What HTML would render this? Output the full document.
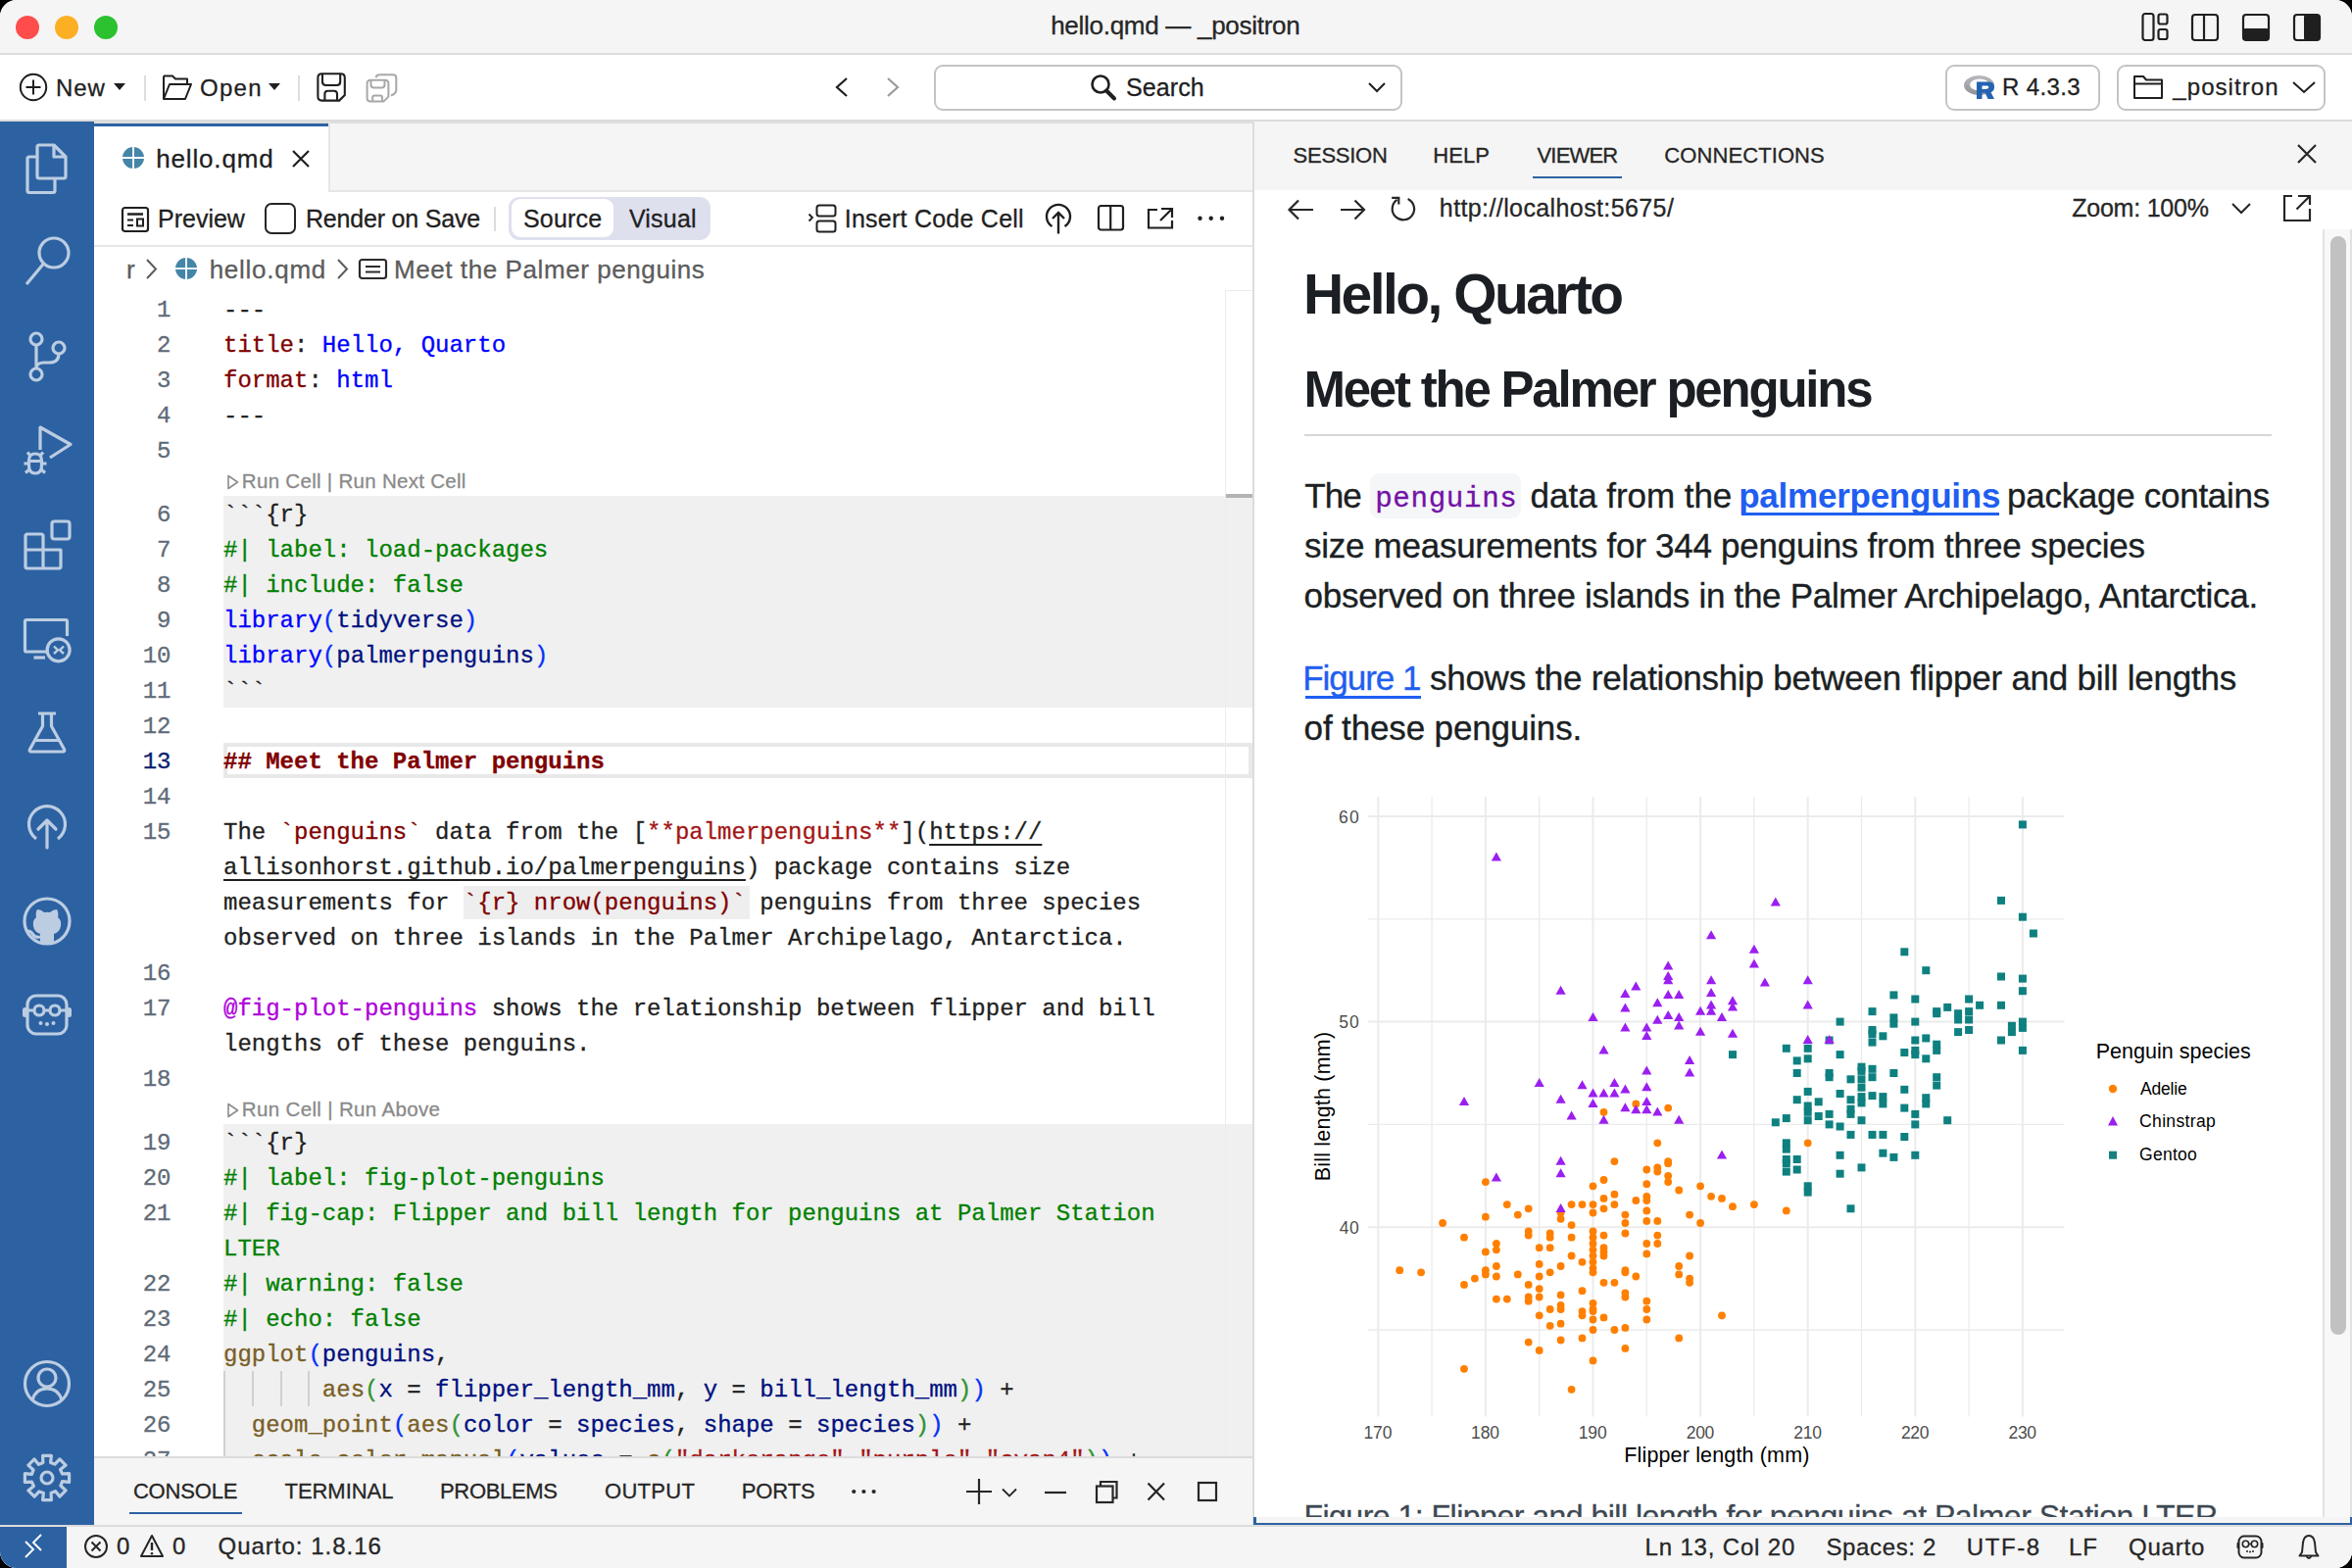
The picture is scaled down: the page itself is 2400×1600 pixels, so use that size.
<!DOCTYPE html><html><head><meta charset="utf-8"><style>
html,body{margin:0;padding:0;background:#000;}
#win{position:absolute;left:0;top:0;width:2400px;height:1600px;overflow:hidden;border-radius:17px;background:#fff;}
.t{position:absolute;white-space:pre;line-height:1;-webkit-text-stroke:0.3px currentColor;}
.r{position:absolute;}
svg.r{overflow:visible}
</style></head><body><div id="win">

<div class="r" style="left:0px;top:0px;width:2400px;height:54px;background:#f5f5f5;"></div>
<div class="r" style="left:0px;top:54px;width:2400px;height:2px;background:#dcdcdc;"></div>
<div class="r" style="left:0px;top:56px;width:2400px;height:66px;background:#ffffff;"></div>
<div class="r" style="left:0px;top:122px;width:2400px;height:2px;background:#dcdcdc;"></div>
<div class="r" style="left:0px;top:124px;width:96px;height:1434px;background:#2d62a2;"></div>
<div class="r" style="left:96px;top:124px;width:1184px;height:71px;background:#f5f5f5;"></div>
<div class="r" style="left:96px;top:194px;width:1184px;height:2px;background:#e6e6e6;"></div>
<div class="r" style="left:96px;top:124px;width:1182px;height:2px;background:#dedede;"></div>
<div class="r" style="left:96px;top:126px;width:239px;height:70px;background:#ffffff;"></div>
<div class="r" style="left:96px;top:126px;width:239px;height:2.5px;background:#2d62a2;"></div>
<div class="r" style="left:335px;top:124px;width:2px;height:71px;background:#e6e6e6;"></div>
<div class="r" style="left:96px;top:196px;width:1182px;height:54px;background:#ffffff;"></div>
<div class="r" style="left:96px;top:250px;width:1182px;height:2px;background:#e6e6e6;"></div>
<div class="r" style="left:96px;top:252px;width:1182px;height:1234px;background:#ffffff;"></div>
<div class="r" style="left:1278px;top:124px;width:2px;height:1434px;background:#dcdcdc;"></div>
<div class="r" style="left:1280px;top:124px;width:1120px;height:70px;background:#f5f5f5;"></div>
<div class="r" style="left:96px;top:1486px;width:1182px;height:2px;background:#dcdcdc;"></div>
<div class="r" style="left:96px;top:1488px;width:1182px;height:68px;background:#f5f5f5;"></div>
<div class="r" style="left:0px;top:1556px;width:2400px;height:2px;background:#dcdcdc;"></div>
<div class="r" style="left:0px;top:1558px;width:2400px;height:42px;background:#f5f5f5;"></div>
<div class="r" style="left:0px;top:1558px;width:68px;height:42px;background:#2d62a2;"></div>
<svg class="r" style="left:0px;top:0px;" width="140" height="54" viewBox="0 0 140 54"><circle cx="28" cy="28" r="12" fill="#fe4d4a"/><circle cx="68" cy="28" r="12" fill="#fdaf24"/><circle cx="108" cy="28" r="12" fill="#2bc12f"/></svg>
<div class="t" style="left:1072.18px;top:13.4px;font-size:26px;color:#262626;font-weight:normal;font-family:'Liberation Sans', sans-serif;letter-spacing:-0.281px;">hello.qmd — _positron</div>
<svg class="r" style="left:2180px;top:10px;" width="200" height="36" viewBox="0 0 200 36"><rect x="6.5" y="4" width="11" height="27" rx="2.5" fill="none" stroke="#1f1f1f" stroke-width="2.2"/><rect x="22.5" y="4.5" width="9" height="10" rx="2" fill="none" stroke="#1f1f1f" stroke-width="2.2"/><rect x="22.5" y="20" width="9" height="10" rx="2" fill="none" stroke="#1f1f1f" stroke-width="2.2"/><rect x="57" y="5" width="26" height="26" rx="3" fill="none" stroke="#1f1f1f" stroke-width="2.2"/><line x1="69" y1="5" x2="69" y2="31" stroke="#1f1f1f" stroke-width="2.2"/><rect x="109" y="5" width="26" height="26" rx="3" fill="none" stroke="#1f1f1f" stroke-width="2.2"/><rect x="109" y="19" width="26" height="12" rx="2" fill="#1f1f1f"/><rect x="161" y="5" width="26" height="26" rx="3" fill="none" stroke="#1f1f1f" stroke-width="2.2"/><rect x="171" y="5" width="16" height="26" rx="2" fill="#1f1f1f"/></svg>
<svg class="r" style="left:18px;top:73px;" width="32" height="32" viewBox="0 0 32 32"><circle cx="16" cy="16" r="13.2" fill="none" stroke="#1f1f1f" stroke-width="2"/><line x1="16" y1="8.5" x2="16" y2="23.5" stroke="#1f1f1f" stroke-width="2"/><line x1="8.5" y1="16" x2="23.5" y2="16" stroke="#1f1f1f" stroke-width="2"/></svg>
<div class="t" style="left:57.08px;top:77.6px;font-size:24px;color:#1f1f1f;font-weight:normal;font-family:'Liberation Sans', sans-serif;letter-spacing:0.900px;">New</div>
<svg class="r" style="left:114px;top:84px;" width="18" height="12" viewBox="0 0 18 12"><path d="M2 1 L14 1 L8 8 Z" fill="#1f1f1f"/></svg>
<div class="r" style="left:147px;top:77px;width:2px;height:26px;background:#dedede;"></div>
<svg class="r" style="left:164px;top:75px;" width="36" height="30" viewBox="0 0 36 30"><path d="M3 2.5 L12 2.5 L15 5.5 L27 5.5 L27 10" fill="none" stroke="#1f1f1f" stroke-width="2" stroke-linejoin="round"/><path d="M3 2.5 L3 26 L25 26 L31 11 L9 11 L3 26" fill="none" stroke="#1f1f1f" stroke-width="2" stroke-linejoin="round"/></svg>
<div class="t" style="left:203.92px;top:77.6px;font-size:24px;color:#1f1f1f;font-weight:normal;font-family:'Liberation Sans', sans-serif;letter-spacing:1.320px;">Open</div>
<svg class="r" style="left:272px;top:84px;" width="18" height="12" viewBox="0 0 18 12"><path d="M2 1 L14 1 L8 8 Z" fill="#1f1f1f"/></svg>
<div class="r" style="left:304px;top:77px;width:2px;height:26px;background:#dedede;"></div>
<svg class="r" style="left:322px;top:73px;" width="32" height="32" viewBox="0 0 32 32"><path d="M6.4 2.2 L25.8 2.2 Q29.8 2.2 29.8 6.2 L29.8 24 L24.2 29.6 L6.4 29.6 Q2.4 29.6 2.4 25.6 L2.4 6.2 Q2.4 2.2 6.4 2.2 Z" fill="none" stroke="#1f1f1f" stroke-width="2.1"/><path d="M7 2.2 L7 10.5 Q7 14 10.5 14 L21.7 14 Q25.2 14 25.2 10.5 L25.2 2.2" fill="none" stroke="#1f1f1f" stroke-width="2.1"/><path d="M9.4 29.6 L9.4 23 Q9.4 19.7 12.7 19.7 L18.7 19.7 Q22 19.7 22 23 L22 29.6" fill="none" stroke="#1f1f1f" stroke-width="2.1"/></svg>
<svg class="r" style="left:372px;top:73px;" width="36" height="34" viewBox="0 0 36 34"><path d="M6.1 8.7 L20.9 8.7 Q24.4 8.7 24.4 12.2 L24.4 25.6 L19.4 30.6 L6.1 30.6 Q2.6 30.6 2.6 27.1 L2.6 12.2 Q2.6 8.7 6.1 8.7 Z" fill="none" stroke="#a8a8a8" stroke-width="2"/><path d="M6.5 8.7 L6.5 13.5 Q6.5 16.5 9.5 16.5 L17.5 16.5 Q20.5 16.5 20.5 13.5 L20.5 8.7" fill="none" stroke="#a8a8a8" stroke-width="2"/><path d="M8.2 30.6 L8.2 26.5 Q8.2 24.5 10.2 24.5 L16 24.5 Q18 24.5 18 26.5 L18 30.6" fill="none" stroke="#a8a8a8" stroke-width="2"/><path d="M11.4 6 Q12.5 3.3 15.5 3.3 L29 3.3 Q32.3 3.3 32.3 6.6 L32.3 19 Q32.3 22.5 27 24.5" fill="none" stroke="#a8a8a8" stroke-width="2"/></svg>
<svg class="r" style="left:846px;top:76px;" width="80" height="26" viewBox="0 0 80 26"><path d="M18 4 L8 13 L18 22" fill="none" stroke="#1f1f1f" stroke-width="2.2"/><path d="M60 4 L70 13 L60 22" fill="none" stroke="#9a9a9a" stroke-width="2.2"/></svg>
<div class="r" style="left:953px;top:65.5px;width:478px;height:47px;background:#fff;box-sizing:border-box;border:2px solid #c4c4c4;border-radius:9px;"></div>
<svg class="r" style="left:1110px;top:74px;" width="32" height="32" viewBox="0 0 32 32"><circle cx="13" cy="12" r="8.5" fill="none" stroke="#1f1f1f" stroke-width="2.6"/><line x1="19" y1="18.5" x2="27" y2="26.5" stroke="#1f1f1f" stroke-width="4" stroke-linecap="round"/></svg>
<div class="t" style="left:1148.88px;top:77.3px;font-size:25px;color:#1f1f1f;font-weight:normal;font-family:'Liberation Sans', sans-serif;letter-spacing:0.125px;">Search</div>
<svg class="r" style="left:1394px;top:82px;" width="24" height="14" viewBox="0 0 24 14"><path d="M3 3 L11 11 L19 3" fill="none" stroke="#1f1f1f" stroke-width="2"/></svg>
<div class="r" style="left:1984.5px;top:65.5px;width:158px;height:47px;background:#fff;box-sizing:border-box;border:2px solid #c4c4c4;border-radius:9px;"></div>
<svg class="r" style="left:2002px;top:74px;" width="36" height="30" viewBox="0 0 36 30"><defs><linearGradient id="rg" x1="0" y1="0" x2="0" y2="1"><stop offset="0" stop-color="#b9b9bf"/><stop offset="1" stop-color="#8f9096"/></linearGradient></defs><ellipse cx="17.5" cy="13" rx="15.5" ry="10" fill="url(#rg)"/><ellipse cx="18" cy="12.5" rx="10" ry="6" fill="#fff"/><path d="M15 9.5 L27.5 9.5 Q33 9.5 33 15 Q33 19 29.5 20 L33 27 L26.5 27 L23.5 20.5 L20.5 20.5 L20.5 27 L15 27 Z M20.5 13.5 L20.5 17 L25.5 17 Q27.5 17 27.5 15.2 Q27.5 13.5 25.5 13.5 Z" fill="#2463b2" fill-rule="evenodd"/></svg>
<div class="t" style="left:2043.08px;top:77.4px;font-size:24px;color:#1f1f1f;font-weight:normal;font-family:'Liberation Sans', sans-serif;letter-spacing:0.347px;">R 4.3.3</div>
<div class="r" style="left:2160px;top:65.5px;width:213px;height:47px;background:#fff;box-sizing:border-box;border:2px solid #c4c4c4;border-radius:9px;"></div>
<svg class="r" style="left:2174px;top:74px;" width="36" height="30" viewBox="0 0 36 30"><path d="M4 4 L13 4 L16 7.5 L32 7.5 L32 26 L4 26 Z" fill="none" stroke="#1f1f1f" stroke-width="2" stroke-linejoin="round"/><line x1="4" y1="11.5" x2="32" y2="11.5" stroke="#1f1f1f" stroke-width="2"/></svg>
<div class="t" style="left:2217.36px;top:77.4px;font-size:24px;color:#1f1f1f;font-weight:normal;font-family:'Liberation Sans', sans-serif;letter-spacing:1.055px;">_positron</div>
<svg class="r" style="left:2336px;top:80px;" width="32" height="18" viewBox="0 0 32 18"><path d="M4 4 L15 14 L26 4" fill="none" stroke="#1f1f1f" stroke-width="2"/></svg>
<svg class="r" style="left:125px;top:150px;" width="22" height="22" viewBox="0 0 22 22"><circle cx="11.0" cy="11.0" r="11.0" fill="#4585a8"/><line x1="11.0" y1="0" x2="11.0" y2="22" stroke="#fff" stroke-width="1.8"/><line x1="0" y1="11.0" x2="22" y2="11.0" stroke="#fff" stroke-width="1.8"/></svg>
<div class="t" style="left:159.18px;top:148.9px;font-size:26px;color:#1f1f1f;font-weight:normal;font-family:'Liberation Sans', sans-serif;letter-spacing:0.850px;">hello.qmd</div>
<svg class="r" style="left:296px;top:151px;" width="22" height="22" viewBox="0 0 22 22"><path d="M3 3 L19 19 M19 3 L3 19" stroke="#1f1f1f" stroke-width="2.2"/></svg>
<svg class="r" style="left:122px;top:209px;" width="32" height="32" viewBox="0 0 32 32"><rect x="3" y="3" width="26" height="24" rx="2.5" fill="none" stroke="#1f1f1f" stroke-width="2.2"/><line x1="8" y1="9.5" x2="24" y2="9.5" stroke="#1f1f1f" stroke-width="2.4"/><line x1="8" y1="15.5" x2="14" y2="15.5" stroke="#1f1f1f" stroke-width="2"/><line x1="8" y1="21" x2="14" y2="21" stroke="#1f1f1f" stroke-width="2"/><rect x="18" y="14.5" width="6" height="7" fill="none" stroke="#1f1f1f" stroke-width="2"/></svg>
<div class="t" style="left:161.0px;top:210.9px;font-size:25px;color:#1f1f1f;font-weight:normal;font-family:'Liberation Sans', sans-serif;letter-spacing:0.000px;">Preview</div>
<div class="r" style="left:269.5px;top:207px;width:32px;height:32px;background:transparent;box-sizing:border-box;border:2.2px solid #262626;border-radius:7px;"></div>
<div class="t" style="left:312.0px;top:210.9px;font-size:25px;color:#1f1f1f;font-weight:normal;font-family:'Liberation Sans', sans-serif;letter-spacing:-0.192px;">Render on Save</div>
<div class="r" style="left:504px;top:211px;width:2px;height:25px;background:#dcdcdc;"></div>
<div class="r" style="left:519px;top:200.5px;width:206px;height:44px;background:#dfe0ee;border-radius:11px;"></div>
<div class="r" style="left:522px;top:203px;width:104px;height:39px;background:#ffffff;border-radius:9px;"></div>
<div class="t" style="left:533.88px;top:210.9px;font-size:25px;color:#1f1f1f;font-weight:normal;font-family:'Liberation Sans', sans-serif;letter-spacing:0.225px;">Source</div>
<div class="t" style="left:641.88px;top:210.9px;font-size:25px;color:#1f1f1f;font-weight:normal;font-family:'Liberation Sans', sans-serif;letter-spacing:0.225px;">Visual</div>
<svg class="r" style="left:822px;top:205px;" width="34" height="36" viewBox="0 0 34 36"><path d="M3.5 13.5 L7 17 L3.5 20.5" fill="none" stroke="#1f1f1f" stroke-width="1.8"/><rect x="11.5" y="4.5" width="19" height="11" rx="2.5" fill="none" stroke="#1f1f1f" stroke-width="2"/><rect x="11.5" y="20.5" width="19" height="11" rx="2.5" fill="none" stroke="#1f1f1f" stroke-width="2"/></svg>
<div class="t" style="left:861.75px;top:211.2px;font-size:25px;color:#1f1f1f;font-weight:normal;font-family:'Liberation Sans', sans-serif;letter-spacing:0.242px;">Insert Code Cell</div>
<svg class="r" style="left:1064px;top:204px;" width="32" height="38" viewBox="0 0 32 38"><path d="M9.5 27 A12 12 0 1 1 22.5 27" fill="none" stroke="#1f1f1f" stroke-width="2.4"/><line x1="16" y1="13" x2="16" y2="34.5" stroke="#1f1f1f" stroke-width="2.4"/><path d="M10 19 L16 13 L22 19" fill="none" stroke="#1f1f1f" stroke-width="2.4"/></svg>
<svg class="r" style="left:1118px;top:207px;" width="30" height="30" viewBox="0 0 30 30"><rect x="3" y="3" width="25" height="24.5" rx="2.5" fill="none" stroke="#1f1f1f" stroke-width="2.2"/><line x1="15.2" y1="3" x2="15.2" y2="27.5" stroke="#1f1f1f" stroke-width="2.2"/></svg>
<svg class="r" style="left:1168px;top:209px;" width="32" height="28" viewBox="0 0 32 28"><path d="M13 5 L4 5 L4 23.5 L28 23.5 L28 16" fill="none" stroke="#1f1f1f" stroke-width="2.2"/><path d="M17 4 L28 4 L28 13 M28 4 L16 16" fill="none" stroke="#1f1f1f" stroke-width="2.2"/></svg>
<svg class="r" style="left:1220px;top:218px;" width="32" height="10" viewBox="0 0 32 10"><circle cx="4.5" cy="4.8" r="2.2" fill="#1f1f1f"/><circle cx="15.7" cy="4.8" r="2.2" fill="#1f1f1f"/><circle cx="27" cy="4.8" r="2.2" fill="#1f1f1f"/></svg>
<div class="t" style="left:129px;top:261.9px;font-size:26px;color:#5c5c5c;font-weight:normal;font-family:'Liberation Sans', sans-serif;">r</div>
<svg class="r" style="left:146px;top:262px;" width="18" height="26" viewBox="0 0 18 26"><path d="M4 3 L13 12.5 L4 22" fill="none" stroke="#5c5c5c" stroke-width="2"/></svg>
<svg class="r" style="left:179px;top:263px;" width="22" height="22" viewBox="0 0 22 22"><circle cx="11.0" cy="11.0" r="11.0" fill="#4585a8"/><line x1="11.0" y1="0" x2="11.0" y2="22" stroke="#fff" stroke-width="1.8"/><line x1="0" y1="11.0" x2="22" y2="11.0" stroke="#fff" stroke-width="1.8"/></svg>
<div class="t" style="left:213.68px;top:261.9px;font-size:26px;color:#5c5c5c;font-weight:normal;font-family:'Liberation Sans', sans-serif;letter-spacing:0.738px;">hello.qmd</div>
<svg class="r" style="left:341px;top:262px;" width="18" height="26" viewBox="0 0 18 26"><path d="M4 3 L13 12.5 L4 22" fill="none" stroke="#5c5c5c" stroke-width="2"/></svg>
<svg class="r" style="left:364px;top:262px;" width="34" height="26" viewBox="0 0 34 26"><rect x="3" y="3" width="27" height="19" rx="2.5" fill="none" stroke="#2b2b2b" stroke-width="2.2"/><line x1="9" y1="10" x2="24" y2="10" stroke="#2b2b2b" stroke-width="2"/><line x1="9" y1="15.5" x2="24" y2="15.5" stroke="#2b2b2b" stroke-width="2"/></svg>
<div class="t" style="left:401.92px;top:261.9px;font-size:26px;color:#5c5c5c;font-weight:normal;font-family:'Liberation Sans', sans-serif;letter-spacing:0.584px;">Meet the Palmer penguins</div>
<svg class="r" style="left:20px;top:140px;" width="56" height="64" viewBox="0 0 56 64"><path d="M18 20 L18 10 Q18 8 20 8 L35 8 L47 20 L47 40 Q47 42 45 42 L20 42 Q18 42 18 40 Z" stroke-width="3.2" fill="none" stroke="#bccde2" stroke-linejoin="round"/><path d="M35 8 L35 20 L47 20" stroke-width="3.2" fill="none" stroke="#bccde2" stroke-linejoin="round"/><path d="M18 20 L10 20 Q8 20 8 22 L8 54.5 Q8 56.5 10 56.5 L34 56.5 Q36 56.5 36 54.5 L36 42" stroke-width="3.2" fill="none" stroke="#bccde2" stroke-linejoin="round"/></svg>
<svg class="r" style="left:20px;top:236px;" width="56" height="64" viewBox="0 0 56 64"><circle cx="35" cy="22" r="15" stroke-width="3.2" fill="none" stroke="#bccde2" stroke-linejoin="round"/><line x1="24.5" y1="33" x2="7" y2="54" stroke-width="3.2" fill="none" stroke="#bccde2" stroke-linejoin="round"/></svg>
<svg class="r" style="left:20px;top:334px;" width="56" height="60" viewBox="0 0 56 60"><circle cx="17" cy="12" r="6" stroke-width="3.2" fill="none" stroke="#bccde2" stroke-linejoin="round"/><circle cx="17" cy="48" r="6" stroke-width="3.2" fill="none" stroke="#bccde2" stroke-linejoin="round"/><circle cx="40" cy="21" r="6" stroke-width="3.2" fill="none" stroke="#bccde2" stroke-linejoin="round"/><path d="M17 18 L17 42 M40 27 Q40 36 30 36 L25 36 Q17 36 17 42" stroke-width="3.2" fill="none" stroke="#bccde2" stroke-linejoin="round"/></svg>
<svg class="r" style="left:20px;top:430px;" width="56" height="60" viewBox="0 0 56 60"><path d="M21 29 L21 6 L52 23.5 L31 37" stroke-width="3.2" fill="none" stroke="#bccde2" stroke-linejoin="round"/><path d="M9.5 40 Q9.5 33 16 33 Q22.5 33 22.5 40 L22.5 45 Q22.5 53 16 53 Q9.5 53 9.5 45 Z" stroke-width="3.2" fill="none" stroke="#bccde2" stroke-linejoin="round"/><path d="M11 35 L8 31.5 M21 35 L24 31.5 M9.5 43 L4.5 43 M22.5 43 L27.5 43 M10 49 L6 52.5 M22 49 L26 52.5 M9.5 40.5 L22.5 40.5" stroke-width="3.2" fill="none" stroke="#bccde2" stroke-linejoin="round"/></svg>
<svg class="r" style="left:20px;top:525px;" width="56" height="60" viewBox="0 0 56 60"><path d="M6 22 L6 53 Q6 55 8 55 L40 55 Q42 55 42 53 L42 36 L24 36 L24 22 Q24 20 22 20 L8 20 Q6 20 6 22 Z M24 36 L24 55 M6 36 L24 36" stroke-width="3.2" fill="none" stroke="#bccde2" stroke-linejoin="round"/><rect x="33" y="7" width="18" height="18" rx="2.5" stroke-width="3.2" fill="none" stroke="#bccde2" stroke-linejoin="round"/></svg>
<svg class="r" style="left:20px;top:625px;" width="56" height="58" viewBox="0 0 56 58"><path d="M30 40 L7 40 Q5.5 40 5.5 38.5 L5.5 9 Q5.5 7.5 7 7.5 L47 7.5 Q48.5 7.5 48.5 9 L48.5 24" stroke-width="3.2" fill="none" stroke="#bccde2" stroke-linejoin="round"/><line x1="14.5" y1="46" x2="26" y2="46" stroke-width="3.2" fill="none" stroke="#bccde2" stroke-linejoin="round"/><circle cx="39.6" cy="38.3" r="11.5" stroke-width="3.2" fill="none" stroke="#bccde2" stroke-linejoin="round"/><path d="M35 34.5 L39 38.3 L35 42 M45 34.5 L41 38.3 L45 42" stroke="#bccde2" stroke-width="2.4" fill="none"/></svg>
<svg class="r" style="left:20px;top:721px;" width="56" height="54" viewBox="0 0 56 54"><path d="M19 7 L37 7 M23.5 7 L23.5 20 L10.5 43.5 Q9.5 46 12 46 L44 46 Q46.5 46 45.5 43.5 L32.5 20 L32.5 7 M15 34.5 L41 34.5" stroke-width="3.2" fill="none" stroke="#bccde2" stroke-linejoin="round"/></svg>
<svg class="r" style="left:20px;top:813px;" width="56" height="60" viewBox="0 0 56 60"><path d="M17 43 A18.5 18.5 0 1 1 39 43" stroke-width="3.2" fill="none" stroke="#bccde2" stroke-linejoin="round"/><path d="M28 24 L28 52 M19 33 L28 24 L37 33" stroke-width="3.2" fill="none" stroke="#bccde2" stroke-linejoin="round" stroke-linecap="round"/></svg>
<svg class="r" style="left:20px;top:909px;" width="56" height="62" viewBox="0 0 56 62"><circle cx="28" cy="31" r="23" stroke-width="3.2" fill="none" stroke="#bccde2" stroke-linejoin="round"/><path d="M21 53 L21 44 Q15 42 14 36 Q13 30 17 27 Q16 22 18 19 Q22 19 25 22 Q28 21.5 31 22 Q34 19 38 19 Q40 22 39 27 Q43 30 42 36 Q41 42 35 44 L35 53 Z" fill="#bccde2"/><path d="M8 41 Q12 41 14 45 Q16 48 21 47" stroke-width="3.2" fill="none" stroke="#bccde2" stroke-linejoin="round"/></svg>
<svg class="r" style="left:20px;top:1009px;" width="56" height="54" viewBox="0 0 56 54"><rect x="8" y="7" width="40" height="39" rx="9" stroke-width="3.2" fill="none" stroke="#bccde2" stroke-linejoin="round"/><circle cx="20" cy="22" r="5" stroke-width="3.2" fill="none" stroke="#bccde2" stroke-linejoin="round"/><circle cx="36" cy="22" r="5" stroke-width="3.2" fill="none" stroke="#bccde2" stroke-linejoin="round"/><path d="M8 22 L15 22 M25 22 L31 22 M41 22 L48 22" stroke-width="3.2" fill="none" stroke="#bccde2" stroke-linejoin="round"/><rect x="3" y="19" width="5" height="10" rx="2.5" fill="#bccde2"/><rect x="48" y="19" width="5" height="10" rx="2.5" fill="#bccde2"/><circle cx="21.5" cy="35" r="2" fill="#bccde2"/><circle cx="28" cy="36" r="2" fill="#bccde2"/><circle cx="34.5" cy="35" r="2" fill="#bccde2"/></svg>
<svg class="r" style="left:20px;top:1382px;" width="56" height="60" viewBox="0 0 56 60"><circle cx="28" cy="30" r="22.5" stroke-width="3.2" fill="none" stroke="#bccde2" stroke-linejoin="round"/><circle cx="28" cy="24" r="9" stroke-width="3.2" fill="none" stroke="#bccde2" stroke-linejoin="round"/><path d="M13 47 Q16 35 28 35 Q40 35 43 47" stroke-width="3.2" fill="none" stroke="#bccde2" stroke-linejoin="round"/></svg>
<svg class="r" style="left:20px;top:1478px;" width="56" height="60" viewBox="0 0 56 60"><path d="M50.6 25.6 L50.6 34.4 L43.6 33.6 L41.9 38.0 L47.1 42.9 L40.9 49.1 L36.5 43.6 L32.1 45.5 L32.4 52.6 L23.6 52.6 L24.4 45.6 L20.0 43.9 L15.1 49.1 L8.9 42.9 L14.4 38.5 L12.5 34.1 L5.4 34.4 L5.4 25.6 L12.4 26.4 L14.1 22.0 L8.9 17.1 L15.1 10.9 L19.5 16.4 L23.9 14.5 L23.6 7.4 L32.4 7.4 L31.6 14.4 L36.0 16.1 L40.9 10.9 L47.1 17.1 L41.6 21.5 L43.5 25.9 Z" stroke-width="3.2" fill="none" stroke="#bccde2" stroke-linejoin="round"/><circle cx="28" cy="30" r="6" stroke-width="3.2" fill="none" stroke="#bccde2" stroke-linejoin="round"/></svg>
<div class="r" style="left:228px;top:506px;width:1050px;height:216px;background:#f0f0f0;"></div>
<div class="r" style="left:228px;top:1147px;width:1050px;height:339px;background:#f0f0f0;"></div>
<div class="r" style="left:228px;top:758px;width:1050px;height:36px;background:transparent;box-sizing:border-box;border:4px solid #e8e8e8;"></div>
<div class="t" style="left:96px;width:78.5px;text-align:right;top:304.76px;font-size:24px;font-family:'Liberation Mono', monospace;color:#5f6b78">1</div>
<div class="t" style="left:228px;top:304.76px;font-size:24px;font-family:'Liberation Mono', monospace;color:#1f1f1f"><span style="color:#1f1f1f;">---</span></div>
<div class="t" style="left:96px;width:78.5px;text-align:right;top:340.76px;font-size:24px;font-family:'Liberation Mono', monospace;color:#5f6b78">2</div>
<div class="t" style="left:228px;top:340.76px;font-size:24px;font-family:'Liberation Mono', monospace;color:#1f1f1f"><span style="color:#800000;">title</span>: <span style="color:#0000ff;">Hello, Quarto</span></div>
<div class="t" style="left:96px;width:78.5px;text-align:right;top:376.76px;font-size:24px;font-family:'Liberation Mono', monospace;color:#5f6b78">3</div>
<div class="t" style="left:228px;top:376.76px;font-size:24px;font-family:'Liberation Mono', monospace;color:#1f1f1f"><span style="color:#800000;">format</span>: <span style="color:#0000ff;">html</span></div>
<div class="t" style="left:96px;width:78.5px;text-align:right;top:412.76px;font-size:24px;font-family:'Liberation Mono', monospace;color:#5f6b78">4</div>
<div class="t" style="left:228px;top:412.76px;font-size:24px;font-family:'Liberation Mono', monospace;color:#1f1f1f"><span style="color:#1f1f1f;">---</span></div>
<div class="t" style="left:96px;width:78.5px;text-align:right;top:448.76px;font-size:24px;font-family:'Liberation Mono', monospace;color:#5f6b78">5</div>
<div class="t" style="left:228px;top:448.76px;font-size:24px;font-family:'Liberation Mono', monospace;color:#1f1f1f"></div>
<svg class="r" style="left:230px;top:483px;" width="16" height="18" viewBox="0 0 16 18"><path d="M3 2.5 L12.5 9 L3 15.5 Z" fill="none" stroke="#8c8c8c" stroke-width="1.6" stroke-linejoin="round"/></svg>
<div class="t" style="left:246.86px;top:481.1px;font-size:20.5px;color:#8a8a8a;font-weight:normal;font-family:'Liberation Sans', sans-serif;letter-spacing:0.294px;">Run Cell | Run Next Cell</div>
<div class="t" style="left:96px;width:78.5px;text-align:right;top:513.76px;font-size:24px;font-family:'Liberation Mono', monospace;color:#5f6b78">6</div>
<div class="t" style="left:228px;top:513.76px;font-size:24px;font-family:'Liberation Mono', monospace;color:#1f1f1f">```{r}</div>
<div class="t" style="left:96px;width:78.5px;text-align:right;top:549.76px;font-size:24px;font-family:'Liberation Mono', monospace;color:#5f6b78">7</div>
<div class="t" style="left:228px;top:549.76px;font-size:24px;font-family:'Liberation Mono', monospace;color:#1f1f1f"><span style="color:#008000;">#| label: load-packages</span></div>
<div class="t" style="left:96px;width:78.5px;text-align:right;top:585.76px;font-size:24px;font-family:'Liberation Mono', monospace;color:#5f6b78">8</div>
<div class="t" style="left:228px;top:585.76px;font-size:24px;font-family:'Liberation Mono', monospace;color:#1f1f1f"><span style="color:#008000;">#| include: false</span></div>
<div class="t" style="left:96px;width:78.5px;text-align:right;top:621.76px;font-size:24px;font-family:'Liberation Mono', monospace;color:#5f6b78">9</div>
<div class="t" style="left:228px;top:621.76px;font-size:24px;font-family:'Liberation Mono', monospace;color:#1f1f1f"><span style="color:#0000ff;">library</span><span style="color:#0431fa;">(</span><span style="color:#001080;">tidyverse</span><span style="color:#0431fa;">)</span></div>
<div class="t" style="left:96px;width:78.5px;text-align:right;top:657.76px;font-size:24px;font-family:'Liberation Mono', monospace;color:#5f6b78">10</div>
<div class="t" style="left:228px;top:657.76px;font-size:24px;font-family:'Liberation Mono', monospace;color:#1f1f1f"><span style="color:#0000ff;">library</span><span style="color:#0431fa;">(</span><span style="color:#001080;">palmerpenguins</span><span style="color:#0431fa;">)</span></div>
<div class="t" style="left:96px;width:78.5px;text-align:right;top:693.76px;font-size:24px;font-family:'Liberation Mono', monospace;color:#5f6b78">11</div>
<div class="t" style="left:228px;top:693.76px;font-size:24px;font-family:'Liberation Mono', monospace;color:#1f1f1f">```</div>
<div class="t" style="left:96px;width:78.5px;text-align:right;top:729.76px;font-size:24px;font-family:'Liberation Mono', monospace;color:#5f6b78">12</div>
<div class="t" style="left:228px;top:729.76px;font-size:24px;font-family:'Liberation Mono', monospace;color:#1f1f1f"></div>
<div class="t" style="left:96px;width:78.5px;text-align:right;top:765.76px;font-size:24px;font-family:'Liberation Mono', monospace;color:#0b216f">13</div>
<div class="t" style="left:228px;top:765.76px;font-size:24px;font-family:'Liberation Mono', monospace;color:#1f1f1f"><span style="color:#800000;font-weight:bold">## Meet the Palmer penguins</span></div>
<div class="t" style="left:96px;width:78.5px;text-align:right;top:801.76px;font-size:24px;font-family:'Liberation Mono', monospace;color:#5f6b78">14</div>
<div class="t" style="left:228px;top:801.76px;font-size:24px;font-family:'Liberation Mono', monospace;color:#1f1f1f"></div>
<div class="t" style="left:96px;width:78.5px;text-align:right;top:837.76px;font-size:24px;font-family:'Liberation Mono', monospace;color:#5f6b78">15</div>
<div class="t" style="left:228px;top:837.76px;font-size:24px;font-family:'Liberation Mono', monospace;color:#1f1f1f">The <span style="color:#800000;">`penguins`</span> data from the [<span style="color:#a31515;">**palmerpenguins**</span>](<span style="color:#1f1f1f;text-decoration:underline;text-underline-offset:5px;text-decoration-thickness:2px">https://</span></div>
<div class="t" style="left:228px;top:873.76px;font-size:24px;font-family:'Liberation Mono', monospace;color:#1f1f1f"><span style="color:#1f1f1f;text-decoration:underline;text-underline-offset:5px;text-decoration-thickness:2px">allisonhorst.github.io/palmerpenguins</span>) package contains size</div>
<div class="r" style="left:472.8px;top:904px;width:292.32px;height:34px;background:#eeeeee;"></div>
<div class="t" style="left:228px;top:909.76px;font-size:24px;font-family:'Liberation Mono', monospace;color:#1f1f1f">measurements for <span style="color:#800000;">`{r} nrow(penguins)`</span> penguins from three species</div>
<div class="t" style="left:228px;top:945.76px;font-size:24px;font-family:'Liberation Mono', monospace;color:#1f1f1f">observed on three islands in the Palmer Archipelago, Antarctica.</div>
<div class="t" style="left:96px;width:78.5px;text-align:right;top:981.76px;font-size:24px;font-family:'Liberation Mono', monospace;color:#5f6b78">16</div>
<div class="t" style="left:228px;top:981.76px;font-size:24px;font-family:'Liberation Mono', monospace;color:#1f1f1f"></div>
<div class="t" style="left:96px;width:78.5px;text-align:right;top:1017.76px;font-size:24px;font-family:'Liberation Mono', monospace;color:#5f6b78">17</div>
<div class="t" style="left:228px;top:1017.76px;font-size:24px;font-family:'Liberation Mono', monospace;color:#1f1f1f"><span style="color:#af00db;">@fig-plot-penguins</span> shows the relationship between flipper and bill</div>
<div class="t" style="left:228px;top:1053.76px;font-size:24px;font-family:'Liberation Mono', monospace;color:#1f1f1f">lengths of these penguins.</div>
<div class="t" style="left:96px;width:78.5px;text-align:right;top:1089.76px;font-size:24px;font-family:'Liberation Mono', monospace;color:#5f6b78">18</div>
<div class="t" style="left:228px;top:1089.76px;font-size:24px;font-family:'Liberation Mono', monospace;color:#1f1f1f"></div>
<svg class="r" style="left:230px;top:1124px;" width="16" height="18" viewBox="0 0 16 18"><path d="M3 2.5 L12.5 9 L3 15.5 Z" fill="none" stroke="#8c8c8c" stroke-width="1.6" stroke-linejoin="round"/></svg>
<div class="t" style="left:246.86px;top:1122.1px;font-size:20.5px;color:#8a8a8a;font-weight:normal;font-family:'Liberation Sans', sans-serif;letter-spacing:0.342px;">Run Cell | Run Above</div>
<div class="t" style="left:96px;width:78.5px;text-align:right;top:1154.76px;font-size:24px;font-family:'Liberation Mono', monospace;color:#5f6b78">19</div>
<div class="t" style="left:228px;top:1154.76px;font-size:24px;font-family:'Liberation Mono', monospace;color:#1f1f1f">```{r}</div>
<div class="t" style="left:96px;width:78.5px;text-align:right;top:1190.76px;font-size:24px;font-family:'Liberation Mono', monospace;color:#5f6b78">20</div>
<div class="t" style="left:228px;top:1190.76px;font-size:24px;font-family:'Liberation Mono', monospace;color:#1f1f1f"><span style="color:#008000;">#| label: fig-plot-penguins</span></div>
<div class="t" style="left:96px;width:78.5px;text-align:right;top:1226.76px;font-size:24px;font-family:'Liberation Mono', monospace;color:#5f6b78">21</div>
<div class="t" style="left:228px;top:1226.76px;font-size:24px;font-family:'Liberation Mono', monospace;color:#1f1f1f"><span style="color:#008000;">#| fig-cap: Flipper and bill length for penguins at Palmer Station</span></div>
<div class="t" style="left:228px;top:1262.76px;font-size:24px;font-family:'Liberation Mono', monospace;color:#1f1f1f"><span style="color:#008000;">LTER</span></div>
<div class="t" style="left:96px;width:78.5px;text-align:right;top:1298.76px;font-size:24px;font-family:'Liberation Mono', monospace;color:#5f6b78">22</div>
<div class="t" style="left:228px;top:1298.76px;font-size:24px;font-family:'Liberation Mono', monospace;color:#1f1f1f"><span style="color:#008000;">#| warning: false</span></div>
<div class="t" style="left:96px;width:78.5px;text-align:right;top:1334.76px;font-size:24px;font-family:'Liberation Mono', monospace;color:#5f6b78">23</div>
<div class="t" style="left:228px;top:1334.76px;font-size:24px;font-family:'Liberation Mono', monospace;color:#1f1f1f"><span style="color:#008000;">#| echo: false</span></div>
<div class="t" style="left:96px;width:78.5px;text-align:right;top:1370.76px;font-size:24px;font-family:'Liberation Mono', monospace;color:#5f6b78">24</div>
<div class="t" style="left:228px;top:1370.76px;font-size:24px;font-family:'Liberation Mono', monospace;color:#1f1f1f"><span style="color:#795e26;">ggplot</span><span style="color:#0431fa;">(</span><span style="color:#001080;">penguins</span>,</div>
<div class="r" style="left:228.0px;top:1399px;width:2px;height:36px;background:#d0d0d0;"></div>
<div class="r" style="left:256.8px;top:1399px;width:2px;height:36px;background:#d0d0d0;"></div>
<div class="r" style="left:285.6px;top:1399px;width:2px;height:36px;background:#d0d0d0;"></div>
<div class="r" style="left:314.4px;top:1399px;width:2px;height:36px;background:#d0d0d0;"></div>
<div class="t" style="left:96px;width:78.5px;text-align:right;top:1406.76px;font-size:24px;font-family:'Liberation Mono', monospace;color:#5f6b78">25</div>
<div class="t" style="left:228px;top:1406.76px;font-size:24px;font-family:'Liberation Mono', monospace;color:#1f1f1f">       <span style="color:#795e26;">aes</span><span style="color:#319331;">(</span><span style="color:#001080;">x</span> = <span style="color:#001080;">flipper_length_mm</span>, <span style="color:#001080;">y</span> = <span style="color:#001080;">bill_length_mm</span><span style="color:#319331;">)</span><span style="color:#0431fa;">)</span> +</div>
<div class="r" style="left:228px;top:1435px;width:2px;height:72px;background:#d0d0d0;"></div>
<div class="t" style="left:96px;width:78.5px;text-align:right;top:1442.76px;font-size:24px;font-family:'Liberation Mono', monospace;color:#5f6b78">26</div>
<div class="t" style="left:228px;top:1442.76px;font-size:24px;font-family:'Liberation Mono', monospace;color:#1f1f1f">  <span style="color:#795e26;">geom_point</span><span style="color:#0431fa;">(</span><span style="color:#795e26;">aes</span><span style="color:#319331;">(</span><span style="color:#001080;">color</span> = <span style="color:#001080;">species</span>, <span style="color:#001080;">shape</span> = <span style="color:#001080;">species</span><span style="color:#319331;">)</span><span style="color:#0431fa;">)</span> +</div>
<div class="t" style="left:96px;width:78.5px;text-align:right;top:1478.76px;font-size:24px;font-family:'Liberation Mono', monospace;color:#5f6b78">27</div>
<div class="t" style="left:228px;top:1478.76px;font-size:24px;font-family:'Liberation Mono', monospace;color:#1f1f1f">  <span style="color:#795e26;">scale_color_manual</span><span style="color:#0431fa;">(</span><span style="color:#001080;">values</span> = <span style="color:#795e26;">c</span><span style="color:#319331;">(</span><span style="color:#a31515;">&quot;darkorange&quot;</span>,<span style="color:#a31515;">&quot;purple&quot;</span>,<span style="color:#a31515;">&quot;cyan4&quot;</span><span style="color:#319331;">)</span><span style="color:#0431fa;">)</span> +</div>
<div class="r" style="left:1250px;top:296px;width:1px;height:1190px;background:#ececec;"></div>
<div class="r" style="left:1250px;top:296px;width:28px;height:1px;background:#ececec;"></div>
<div class="r" style="left:1251px;top:504px;width:27px;height:4px;background:#b4b4b4;"></div>
<div class="r" style="left:96px;top:1486px;width:1182px;height:2px;background:#dcdcdc;"></div>
<div class="r" style="left:96px;top:1488px;width:1182px;height:68px;background:#f5f5f5;"></div>
<div class="t" style="left:135.9px;top:1511.3px;font-size:22px;color:#262626;font-weight:normal;font-family:'Liberation Sans', sans-serif;letter-spacing:-0.183px;">CONSOLE</div>
<div class="t" style="left:290.56px;top:1511.3px;font-size:22px;color:#262626;font-weight:normal;font-family:'Liberation Sans', sans-serif;letter-spacing:-0.059px;">TERMINAL</div>
<div class="t" style="left:448.94px;top:1511.3px;font-size:22px;color:#262626;font-weight:normal;font-family:'Liberation Sans', sans-serif;letter-spacing:-0.309px;">PROBLEMS</div>
<div class="t" style="left:617.01px;top:1511.3px;font-size:22px;color:#262626;font-weight:normal;font-family:'Liberation Sans', sans-serif;letter-spacing:0.302px;">OUTPUT</div>
<div class="t" style="left:756.74px;top:1511.3px;font-size:22px;color:#262626;font-weight:normal;font-family:'Liberation Sans', sans-serif;letter-spacing:-0.125px;">PORTS</div>
<div class="r" style="left:132px;top:1542.5px;width:115px;height:2.5px;background:#2d62a2;"></div>
<svg class="r" style="left:860px;top:1512px;" width="40" height="20" viewBox="0 0 40 20"><circle cx="11.25" cy="10" r="2.1" fill="#262626"/><circle cx="21.4" cy="10" r="2.1" fill="#262626"/><circle cx="31.6" cy="10" r="2.1" fill="#262626"/></svg>
<svg class="r" style="left:980px;top:1500px;" width="270" height="44" viewBox="0 0 270 44"><path d="M6 22 L32 22 M19 9 L19 35" stroke="#262626" stroke-width="2.2"/><path d="M43 19.5 L50 26.5 L57 19.5" fill="none" stroke="#262626" stroke-width="1.8"/><path d="M86 23 L108 23" stroke="#262626" stroke-width="2.2"/><rect x="139" y="16.5" width="16.5" height="16.5" fill="none" stroke="#262626" stroke-width="2.2"/><path d="M143 16.5 L143 12 L159.5 12 L159.5 28.5 L155.5 28.5" fill="none" stroke="#262626" stroke-width="2.2"/><path d="M191.5 13.5 L208 30.5 M208 13.5 L191.5 30.5" stroke="#262626" stroke-width="2.2"/><rect x="243" y="13" width="18" height="18" fill="none" stroke="#262626" stroke-width="2.2"/></svg>
<div class="r" style="left:0px;top:1555.5px;width:2400px;height:2px;background:#dcdcdc;"></div>
<div class="r" style="left:0px;top:1557.5px;width:2400px;height:42.5px;background:#f5f5f5;"></div>
<div class="r" style="left:0px;top:1557.5px;width:68px;height:42.5px;background:#2d62a2;"></div>
<svg class="r" style="left:20px;top:1560px;" width="30" height="34" viewBox="0 0 30 34"><path d="M6 29 L14 21 L6 13 M22 6 L14 14 L22 22" fill="none" stroke="#ffffff" stroke-width="1.9"/></svg>
<svg class="r" style="left:82px;top:1562px;" width="90" height="32" viewBox="0 0 90 32"><circle cx="16" cy="16" r="11" fill="none" stroke="#262626" stroke-width="2"/><path d="M11.5 11.5 L20.5 20.5 M20.5 11.5 L11.5 20.5" stroke="#262626" stroke-width="2"/><path d="M73 5 L84 26 L62 26 Z" fill="none" stroke="#262626" stroke-width="2" stroke-linejoin="round"/><path d="M73 12 L73 20" stroke="#262626" stroke-width="2.4"/><circle cx="73" cy="23.2" r="1.3" fill="#262626"/></svg>
<div class="t" style="left:119.04px;top:1566.2px;font-size:24px;color:#262626;font-weight:normal;font-family:'Liberation Sans', sans-serif;letter-spacing:0.000px;">0</div>
<div class="t" style="left:176.04px;top:1566.2px;font-size:24px;color:#262626;font-weight:normal;font-family:'Liberation Sans', sans-serif;letter-spacing:0.000px;">0</div>
<div class="t" style="left:222.52px;top:1566.2px;font-size:24px;color:#262626;font-weight:normal;font-family:'Liberation Sans', sans-serif;letter-spacing:0.991px;">Quarto: 1.8.16</div>
<div class="t" style="left:1678.58px;top:1566.6px;font-size:24px;color:#262626;font-weight:normal;font-family:'Liberation Sans', sans-serif;letter-spacing:0.830px;">Ln 13, Col 20</div>
<div class="t" style="left:1863.42px;top:1566.6px;font-size:24px;color:#262626;font-weight:normal;font-family:'Liberation Sans', sans-serif;letter-spacing:0.638px;">Spaces: 2</div>
<div class="t" style="left:2006.8px;top:1566.6px;font-size:24px;color:#262626;font-weight:normal;font-family:'Liberation Sans', sans-serif;letter-spacing:1.560px;">UTF-8</div>
<div class="t" style="left:2111.08px;top:1566.6px;font-size:24px;color:#262626;font-weight:normal;font-family:'Liberation Sans', sans-serif;letter-spacing:0.920px;">LF</div>
<div class="t" style="left:2171.92px;top:1566.6px;font-size:24px;color:#262626;font-weight:normal;font-family:'Liberation Sans', sans-serif;letter-spacing:0.824px;">Quarto</div>
<svg class="r" style="left:2280px;top:1564px;" width="32" height="30" viewBox="0 0 32 30"><rect x="4.5" y="3.5" width="23" height="22" rx="5.5" fill="none" stroke="#262626" stroke-width="2"/><circle cx="11.5" cy="11.5" r="3.2" fill="none" stroke="#262626" stroke-width="1.6"/><circle cx="20.5" cy="11.5" r="3.2" fill="none" stroke="#262626" stroke-width="1.6"/><path d="M14.7 11.5 L17.3 11.5" stroke="#262626" stroke-width="1.4"/><rect x="2.5" y="10" width="2.5" height="6" rx="1" fill="#262626"/><rect x="27" y="10" width="2.5" height="6" rx="1" fill="#262626"/><circle cx="13" cy="19" r="1" fill="#262626"/><circle cx="16" cy="19.5" r="1" fill="#262626"/><circle cx="19" cy="19" r="1" fill="#262626"/></svg>
<svg class="r" style="left:2340px;top:1562px;" width="32" height="32" viewBox="0 0 32 32"><path d="M9 22 L10 12 Q11 5 16 5 Q21 5 22 12 L23 22 L25.5 25.5 L6.5 25.5 Z" fill="none" stroke="#262626" stroke-width="2" stroke-linejoin="round"/><path d="M13.5 26 Q16 30 18.5 26" fill="none" stroke="#262626" stroke-width="1.8"/></svg>
<div class="t" style="left:1319.61px;top:148.3px;font-size:22px;color:#262626;font-weight:normal;font-family:'Liberation Sans', sans-serif;letter-spacing:-0.273px;">SESSION</div>
<div class="t" style="left:1462.24px;top:148.3px;font-size:22px;color:#262626;font-weight:normal;font-family:'Liberation Sans', sans-serif;letter-spacing:0.080px;">HELP</div>
<div class="t" style="left:1568.49px;top:148.3px;font-size:22px;color:#262626;font-weight:normal;font-family:'Liberation Sans', sans-serif;letter-spacing:-0.818px;">VIEWER</div>
<div class="t" style="left:1698.3px;top:148.3px;font-size:22px;color:#262626;font-weight:normal;font-family:'Liberation Sans', sans-serif;letter-spacing:0.092px;">CONNECTIONS</div>
<div class="r" style="left:1564px;top:179.5px;width:91px;height:2.8px;background:#2d62a2;"></div>
<svg class="r" style="left:2340px;top:143px;" width="28" height="28" viewBox="0 0 28 28"><path d="M5 5 L23 23 M23 5 L5 23" stroke="#262626" stroke-width="2.2"/></svg>
<div class="r" style="left:1280px;top:194px;width:1120px;height:40px;background:#ffffff;"></div>
<svg class="r" style="left:1310px;top:198px;" width="150" height="32" viewBox="0 0 150 32"><path d="M6 16 L30 16 M15 6.5 L5.5 16 L15 25.5" fill="none" stroke="#262626" stroke-width="2.2"/><path d="M58 16 L82 16 M72.5 6.5 L82 16 L72.5 25.5" fill="none" stroke="#262626" stroke-width="2.2"/><path d="M126.6 4.95 A11.2 11.2 0 1 1 115.5 5.9" fill="none" stroke="#262626" stroke-width="2.2"/><path d="M110.2 3.9 L117.3 3.9 L117.3 10.5" fill="none" stroke="#262626" stroke-width="2.2"/></svg>
<div class="t" style="left:1468.85px;top:199.8px;font-size:25px;color:#262626;font-weight:normal;font-family:'Liberation Sans', sans-serif;letter-spacing:0.395px;">http://localhost:5675/</div>
<div class="t" style="left:2114.25px;top:199.8px;font-size:25px;color:#262626;font-weight:normal;font-family:'Liberation Sans', sans-serif;letter-spacing:-0.236px;">Zoom: 100%</div>
<svg class="r" style="left:2274px;top:204px;" width="26" height="18" viewBox="0 0 26 18"><path d="M4 4 L13 13 L22 4" fill="none" stroke="#262626" stroke-width="2"/></svg>
<svg class="r" style="left:2326px;top:196px;" width="36" height="34" viewBox="0 0 36 34"><path d="M13 4 L5 4 L5 29 L31 29 L31 17" fill="none" stroke="#262626" stroke-width="2.2"/><path d="M19 4 L31 4 L31 13 M31 4 L17.5 17.5" fill="none" stroke="#262626" stroke-width="2.2"/></svg>
<div class="r" style="left:1280px;top:234px;width:1090px;height:1314px;background:#ffffff;"></div>
<div class="r" style="left:2370px;top:234px;width:2px;height:1314px;background:#e2e2e2;"></div>
<div class="r" style="left:2372px;top:234px;width:26px;height:1314px;background:#f8f8f8;"></div>
<div class="r" style="left:2398px;top:234px;width:2px;height:1314px;background:#e2e2e2;"></div>
<div class="r" style="left:2378px;top:240.8px;width:16px;height:1121px;background:#c1c1c1;border-radius:8px;"></div>
<div class="r" style="left:1280px;top:1548px;width:1120px;height:5.5px;background:#f5f5f5;"></div>
<div class="r" style="left:1279px;top:1548px;width:2.5px;height:8px;background:#2d62a2;"></div>
<div class="r" style="left:2397.5px;top:1548px;width:2.5px;height:8px;background:#2d62a2;"></div>
<div class="r" style="left:1279px;top:1553.5px;width:1121px;height:2.5px;background:#2d62a2;"></div>
<div class="t" style="left:1330.0px;top:271.9px;font-size:57px;color:#1b1f23;font-weight:bold;font-family:'Liberation Sans', sans-serif;-webkit-text-stroke:0;letter-spacing:-2.556px;">Hello, Quarto</div>
<div class="t" style="left:1330.38px;top:371.8px;font-size:51px;color:#1b1f23;font-weight:bold;font-family:'Liberation Sans', sans-serif;-webkit-text-stroke:0;letter-spacing:-2.206px;">Meet the Palmer penguins</div>
<div class="r" style="left:1331px;top:443px;width:987px;height:2px;background:#d5d7da;"></div>
<div class="t" style="left:1331.3px;top:487.8px;font-size:35px;color:#1b1f23;font-weight:normal;font-family:'Liberation Sans', sans-serif;-webkit-text-stroke:0.35px currentColor;letter-spacing:-0.962px;">The</div>
<div class="r" style="left:1398.2px;top:483.2px;width:154.3px;height:46.3px;background:#f5f6f8;border-radius:9px;"></div>
<div class="t" style="left:1403.22px;top:494.6px;font-size:29.2px;color:#7212a6;font-weight:normal;font-family:'Liberation Mono', monospace;letter-spacing:0.637px;">penguins</div>
<div class="t" style="left:1561.6px;top:487.8px;font-size:35px;color:#1b1f23;font-weight:normal;font-family:'Liberation Sans', sans-serif;-webkit-text-stroke:0.35px currentColor;letter-spacing:-0.040px;">data from the</div>
<div class="t" style="left:1774.22px;top:487.8px;font-size:35px;color:#1f5ef0;font-weight:bold;font-family:'Liberation Sans', sans-serif;-webkit-text-stroke:0;letter-spacing:-0.246px;">palmerpenguins</div>
<div class="r" style="left:1776.5px;top:523.3px;width:263.5px;height:2.6px;background:#1f5ef0;"></div>
<div class="t" style="left:2048.12px;top:487.8px;font-size:35px;color:#1b1f23;font-weight:normal;font-family:'Liberation Sans', sans-serif;-webkit-text-stroke:0.35px currentColor;letter-spacing:-0.292px;">package contains</div>
<div class="t" style="left:1330.95px;top:538.8px;font-size:35px;color:#1b1f23;font-weight:normal;font-family:'Liberation Sans', sans-serif;-webkit-text-stroke:0.35px currentColor;letter-spacing:-0.258px;">size measurements for 344 penguins from three species</div>
<div class="t" style="left:1330.6px;top:589.8px;font-size:35px;color:#1b1f23;font-weight:normal;font-family:'Liberation Sans', sans-serif;-webkit-text-stroke:0.35px currentColor;letter-spacing:-0.297px;">observed on three islands in the Palmer Archipelago, Antarctica.</div>
<div class="t" style="left:1329.2px;top:674.2px;font-size:35px;color:#1f5ef0;font-weight:normal;font-family:'Liberation Sans', sans-serif;-webkit-text-stroke:0.35px currentColor;letter-spacing:-1.014px;">Figure 1</div>
<div class="r" style="left:1331.5px;top:710px;width:118.5px;height:2.6px;background:#1f5ef0;"></div>
<div class="t" style="left:1458.95px;top:674.2px;font-size:35px;color:#1b1f23;font-weight:normal;font-family:'Liberation Sans', sans-serif;-webkit-text-stroke:0.35px currentColor;letter-spacing:-0.248px;">shows the relationship between flipper and bill lengths</div>
<div class="t" style="left:1330.6px;top:724.8px;font-size:35px;color:#1b1f23;font-weight:normal;font-family:'Liberation Sans', sans-serif;-webkit-text-stroke:0.35px currentColor;letter-spacing:-0.141px;">of these penguins.</div>
<svg class="r" style="left:0;top:0" width="2400" height="1600"><line x1="1396" y1="1357.0" x2="2106.5" y2="1357.0" stroke="#ebebeb" stroke-width="1.3"/><line x1="1396" y1="1252.2" x2="2106.5" y2="1252.2" stroke="#ebebeb" stroke-width="2.0"/><line x1="1396" y1="1147.4" x2="2106.5" y2="1147.4" stroke="#ebebeb" stroke-width="1.3"/><line x1="1396" y1="1042.6" x2="2106.5" y2="1042.6" stroke="#ebebeb" stroke-width="2.0"/><line x1="1396" y1="937.8" x2="2106.5" y2="937.8" stroke="#ebebeb" stroke-width="1.3"/><line x1="1396" y1="833.0" x2="2106.5" y2="833.0" stroke="#ebebeb" stroke-width="2.0"/><line x1="1406.3" y1="813" x2="1406.3" y2="1445.6" stroke="#ebebeb" stroke-width="2.0"/><line x1="1461.1" y1="813" x2="1461.1" y2="1445.6" stroke="#ebebeb" stroke-width="1.3"/><line x1="1515.9" y1="813" x2="1515.9" y2="1445.6" stroke="#ebebeb" stroke-width="2.0"/><line x1="1570.7" y1="813" x2="1570.7" y2="1445.6" stroke="#ebebeb" stroke-width="1.3"/><line x1="1625.5" y1="813" x2="1625.5" y2="1445.6" stroke="#ebebeb" stroke-width="2.0"/><line x1="1680.3" y1="813" x2="1680.3" y2="1445.6" stroke="#ebebeb" stroke-width="1.3"/><line x1="1735.1" y1="813" x2="1735.1" y2="1445.6" stroke="#ebebeb" stroke-width="2.0"/><line x1="1789.9" y1="813" x2="1789.9" y2="1445.6" stroke="#ebebeb" stroke-width="1.3"/><line x1="1844.7" y1="813" x2="1844.7" y2="1445.6" stroke="#ebebeb" stroke-width="2.0"/><line x1="1899.5" y1="813" x2="1899.5" y2="1445.6" stroke="#ebebeb" stroke-width="1.3"/><line x1="1954.3" y1="813" x2="1954.3" y2="1445.6" stroke="#ebebeb" stroke-width="2.0"/><line x1="2009.1" y1="813" x2="2009.1" y2="1445.6" stroke="#ebebeb" stroke-width="1.3"/><line x1="2063.9" y1="813" x2="2063.9" y2="1445.6" stroke="#ebebeb" stroke-width="2.0"/><g fill="#ff8000"><circle cx="1669.3" cy="1126.4" r="3.9"/><circle cx="1636.5" cy="1134.8" r="3.9"/><circle cx="1702.2" cy="1130.6" r="3.9"/><circle cx="1691.3" cy="1166.3" r="3.9"/><circle cx="1844.7" cy="1166.3" r="3.9"/><circle cx="1647.4" cy="1185.1" r="3.9"/><circle cx="1702.2" cy="1185.1" r="3.9"/><circle cx="1702.2" cy="1187.2" r="3.9"/><circle cx="1680.3" cy="1193.5" r="3.9"/><circle cx="1691.3" cy="1191.4" r="3.9"/><circle cx="1691.3" cy="1195.6" r="3.9"/><circle cx="1702.2" cy="1199.8" r="3.9"/><circle cx="1702.2" cy="1206.1" r="3.9"/><circle cx="1636.5" cy="1204.0" r="3.9"/><circle cx="1515.9" cy="1206.1" r="3.9"/><circle cx="1625.5" cy="1210.3" r="3.9"/><circle cx="1680.3" cy="1208.2" r="3.9"/><circle cx="1735.1" cy="1210.3" r="3.9"/><circle cx="1537.8" cy="1229.1" r="3.9"/><circle cx="1559.7" cy="1233.3" r="3.9"/><circle cx="1548.8" cy="1239.6" r="3.9"/><circle cx="1515.9" cy="1241.7" r="3.9"/><circle cx="1472.1" cy="1248.0" r="3.9"/><circle cx="1592.6" cy="1237.5" r="3.9"/><circle cx="1592.6" cy="1243.8" r="3.9"/><circle cx="1603.6" cy="1229.1" r="3.9"/><circle cx="1614.5" cy="1229.1" r="3.9"/><circle cx="1625.5" cy="1229.1" r="3.9"/><circle cx="1625.5" cy="1237.5" r="3.9"/><circle cx="1603.6" cy="1250.1" r="3.9"/><circle cx="1494.0" cy="1262.7" r="3.9"/><circle cx="1559.7" cy="1256.4" r="3.9"/><circle cx="1559.7" cy="1260.6" r="3.9"/><circle cx="1581.7" cy="1258.5" r="3.9"/><circle cx="1581.7" cy="1262.7" r="3.9"/><circle cx="1603.6" cy="1262.7" r="3.9"/><circle cx="1526.9" cy="1269.0" r="3.9"/><circle cx="1526.9" cy="1275.3" r="3.9"/><circle cx="1515.9" cy="1277.4" r="3.9"/><circle cx="1570.7" cy="1273.2" r="3.9"/><circle cx="1581.7" cy="1273.2" r="3.9"/><circle cx="1603.6" cy="1281.5" r="3.9"/><circle cx="1614.5" cy="1287.8" r="3.9"/><circle cx="1625.5" cy="1256.4" r="3.9"/><circle cx="1625.5" cy="1262.7" r="3.9"/><circle cx="1625.5" cy="1269.0" r="3.9"/><circle cx="1625.5" cy="1275.3" r="3.9"/><circle cx="1625.5" cy="1281.5" r="3.9"/><circle cx="1625.5" cy="1287.8" r="3.9"/><circle cx="1625.5" cy="1294.1" r="3.9"/><circle cx="1625.5" cy="1298.3" r="3.9"/><circle cx="1428.2" cy="1296.2" r="3.9"/><circle cx="1450.1" cy="1298.3" r="3.9"/><circle cx="1526.9" cy="1292.0" r="3.9"/><circle cx="1515.9" cy="1296.2" r="3.9"/><circle cx="1515.9" cy="1300.4" r="3.9"/><circle cx="1526.9" cy="1302.5" r="3.9"/><circle cx="1504.9" cy="1304.6" r="3.9"/><circle cx="1494.0" cy="1310.9" r="3.9"/><circle cx="1548.8" cy="1300.4" r="3.9"/><circle cx="1570.7" cy="1289.9" r="3.9"/><circle cx="1570.7" cy="1302.5" r="3.9"/><circle cx="1581.7" cy="1298.3" r="3.9"/><circle cx="1592.6" cy="1292.0" r="3.9"/><circle cx="1559.7" cy="1310.9" r="3.9"/><circle cx="1570.7" cy="1315.1" r="3.9"/><circle cx="1570.7" cy="1323.5" r="3.9"/><circle cx="1526.9" cy="1325.6" r="3.9"/><circle cx="1537.8" cy="1325.6" r="3.9"/><circle cx="1559.7" cy="1323.5" r="3.9"/><circle cx="1559.7" cy="1327.7" r="3.9"/><circle cx="1592.6" cy="1321.4" r="3.9"/><circle cx="1592.6" cy="1331.8" r="3.9"/><circle cx="1592.6" cy="1336.0" r="3.9"/><circle cx="1581.7" cy="1336.0" r="3.9"/><circle cx="1570.7" cy="1342.3" r="3.9"/><circle cx="1614.5" cy="1317.2" r="3.9"/><circle cx="1614.5" cy="1338.1" r="3.9"/><circle cx="1614.5" cy="1342.3" r="3.9"/><circle cx="1625.5" cy="1329.8" r="3.9"/><circle cx="1625.5" cy="1336.0" r="3.9"/><circle cx="1625.5" cy="1338.1" r="3.9"/><circle cx="1625.5" cy="1346.5" r="3.9"/><circle cx="1581.7" cy="1352.8" r="3.9"/><circle cx="1592.6" cy="1350.7" r="3.9"/><circle cx="1625.5" cy="1357.0" r="3.9"/><circle cx="1559.7" cy="1369.6" r="3.9"/><circle cx="1570.7" cy="1378.0" r="3.9"/><circle cx="1592.6" cy="1367.5" r="3.9"/><circle cx="1614.5" cy="1365.4" r="3.9"/><circle cx="1494.0" cy="1396.8" r="3.9"/><circle cx="1625.5" cy="1388.4" r="3.9"/><circle cx="1603.6" cy="1417.8" r="3.9"/><circle cx="1713.2" cy="1214.5" r="3.9"/><circle cx="1636.5" cy="1222.9" r="3.9"/><circle cx="1647.4" cy="1218.7" r="3.9"/><circle cx="1647.4" cy="1229.1" r="3.9"/><circle cx="1636.5" cy="1233.3" r="3.9"/><circle cx="1669.3" cy="1225.0" r="3.9"/><circle cx="1680.3" cy="1220.8" r="3.9"/><circle cx="1680.3" cy="1225.0" r="3.9"/><circle cx="1680.3" cy="1235.4" r="3.9"/><circle cx="1658.4" cy="1239.6" r="3.9"/><circle cx="1658.4" cy="1248.0" r="3.9"/><circle cx="1680.3" cy="1245.9" r="3.9"/><circle cx="1691.3" cy="1245.9" r="3.9"/><circle cx="1724.1" cy="1239.6" r="3.9"/><circle cx="1735.1" cy="1248.0" r="3.9"/><circle cx="1746.1" cy="1220.8" r="3.9"/><circle cx="1757.0" cy="1222.9" r="3.9"/><circle cx="1768.0" cy="1231.2" r="3.9"/><circle cx="1789.9" cy="1229.1" r="3.9"/><circle cx="1822.8" cy="1235.4" r="3.9"/><circle cx="1636.5" cy="1260.6" r="3.9"/><circle cx="1658.4" cy="1258.5" r="3.9"/><circle cx="1691.3" cy="1260.6" r="3.9"/><circle cx="1691.3" cy="1269.0" r="3.9"/><circle cx="1680.3" cy="1269.0" r="3.9"/><circle cx="1636.5" cy="1273.2" r="3.9"/><circle cx="1636.5" cy="1277.4" r="3.9"/><circle cx="1636.5" cy="1281.5" r="3.9"/><circle cx="1680.3" cy="1279.4" r="3.9"/><circle cx="1724.1" cy="1281.5" r="3.9"/><circle cx="1713.2" cy="1292.0" r="3.9"/><circle cx="1713.2" cy="1300.4" r="3.9"/><circle cx="1724.1" cy="1304.6" r="3.9"/><circle cx="1724.1" cy="1308.8" r="3.9"/><circle cx="1658.4" cy="1296.2" r="3.9"/><circle cx="1658.4" cy="1298.3" r="3.9"/><circle cx="1669.3" cy="1302.5" r="3.9"/><circle cx="1636.5" cy="1308.8" r="3.9"/><circle cx="1647.4" cy="1308.8" r="3.9"/><circle cx="1658.4" cy="1319.3" r="3.9"/><circle cx="1658.4" cy="1323.5" r="3.9"/><circle cx="1680.3" cy="1327.7" r="3.9"/><circle cx="1680.3" cy="1336.0" r="3.9"/><circle cx="1636.5" cy="1344.4" r="3.9"/><circle cx="1680.3" cy="1346.5" r="3.9"/><circle cx="1757.0" cy="1342.3" r="3.9"/><circle cx="1647.4" cy="1357.0" r="3.9"/><circle cx="1658.4" cy="1354.9" r="3.9"/><circle cx="1713.2" cy="1365.4" r="3.9"/><circle cx="1658.4" cy="1375.9" r="3.9"/></g><g fill="#0f8080"><rect x="2059.9" y="837.4" width="8" height="8"/><rect x="2038.0" y="914.9" width="8" height="8"/><rect x="2059.9" y="931.7" width="8" height="8"/><rect x="2070.9" y="948.5" width="8" height="8"/><rect x="1939.3" y="967.3" width="8" height="8"/><rect x="1961.3" y="986.2" width="8" height="8"/><rect x="2038.0" y="992.5" width="8" height="8"/><rect x="2059.9" y="994.6" width="8" height="8"/><rect x="2059.9" y="1007.2" width="8" height="8"/><rect x="1928.4" y="1011.4" width="8" height="8"/><rect x="1950.3" y="1015.5" width="8" height="8"/><rect x="2005.1" y="1015.5" width="8" height="8"/><rect x="2016.1" y="1021.8" width="8" height="8"/><rect x="2038.0" y="1021.8" width="8" height="8"/><rect x="1983.2" y="1023.9" width="8" height="8"/><rect x="1972.2" y="1028.1" width="8" height="8"/><rect x="1972.2" y="1030.2" width="8" height="8"/><rect x="1906.5" y="1028.1" width="8" height="8"/><rect x="1994.1" y="1030.2" width="8" height="8"/><rect x="2005.1" y="1028.1" width="8" height="8"/><rect x="1928.4" y="1034.4" width="8" height="8"/><rect x="1950.3" y="1038.6" width="8" height="8"/><rect x="1994.1" y="1036.5" width="8" height="8"/><rect x="2005.1" y="1036.5" width="8" height="8"/><rect x="2059.9" y="1038.6" width="8" height="8"/><rect x="1873.6" y="1038.6" width="8" height="8"/><rect x="1764.0" y="1072.1" width="8" height="8"/><rect x="1818.8" y="1065.8" width="8" height="8"/><rect x="1840.7" y="1065.8" width="8" height="8"/><rect x="1829.7" y="1078.4" width="8" height="8"/><rect x="1840.7" y="1076.3" width="8" height="8"/><rect x="1862.6" y="1057.5" width="8" height="8"/><rect x="1829.7" y="1091.0" width="8" height="8"/><rect x="1862.6" y="1091.0" width="8" height="8"/><rect x="1862.6" y="1095.2" width="8" height="8"/><rect x="1840.7" y="1109.9" width="8" height="8"/><rect x="1829.7" y="1118.2" width="8" height="8"/><rect x="1851.7" y="1120.3" width="8" height="8"/><rect x="1840.7" y="1124.5" width="8" height="8"/><rect x="1840.7" y="1130.8" width="8" height="8"/><rect x="1840.7" y="1139.2" width="8" height="8"/><rect x="1851.7" y="1135.0" width="8" height="8"/><rect x="1818.8" y="1137.1" width="8" height="8"/><rect x="1807.8" y="1141.3" width="8" height="8"/><rect x="1862.6" y="1132.9" width="8" height="8"/><rect x="1862.6" y="1143.4" width="8" height="8"/><rect x="1818.8" y="1162.3" width="8" height="8"/><rect x="1818.8" y="1168.6" width="8" height="8"/><rect x="1818.8" y="1179.0" width="8" height="8"/><rect x="1818.8" y="1183.2" width="8" height="8"/><rect x="1829.7" y="1179.0" width="8" height="8"/><rect x="1818.8" y="1191.6" width="8" height="8"/><rect x="1829.7" y="1189.5" width="8" height="8"/><rect x="1840.7" y="1206.3" width="8" height="8"/><rect x="1840.7" y="1212.6" width="8" height="8"/><rect x="1906.5" y="1047.0" width="8" height="8"/><rect x="1906.5" y="1051.2" width="8" height="8"/><rect x="1906.5" y="1059.6" width="8" height="8"/><rect x="1917.4" y="1053.3" width="8" height="8"/><rect x="1928.4" y="1040.7" width="8" height="8"/><rect x="1950.3" y="1057.5" width="8" height="8"/><rect x="1961.3" y="1055.4" width="8" height="8"/><rect x="1972.2" y="1061.7" width="8" height="8"/><rect x="1972.2" y="1067.9" width="8" height="8"/><rect x="1939.3" y="1070.0" width="8" height="8"/><rect x="1950.3" y="1067.9" width="8" height="8"/><rect x="1950.3" y="1072.1" width="8" height="8"/><rect x="1961.3" y="1076.3" width="8" height="8"/><rect x="1994.1" y="1049.1" width="8" height="8"/><rect x="2005.1" y="1047.0" width="8" height="8"/><rect x="2038.0" y="1057.5" width="8" height="8"/><rect x="2048.9" y="1042.8" width="8" height="8"/><rect x="2048.9" y="1049.1" width="8" height="8"/><rect x="2059.9" y="1044.9" width="8" height="8"/><rect x="2059.9" y="1067.9" width="8" height="8"/><rect x="1873.6" y="1072.1" width="8" height="8"/><rect x="1884.5" y="1097.3" width="8" height="8"/><rect x="1895.5" y="1084.7" width="8" height="8"/><rect x="1895.5" y="1088.9" width="8" height="8"/><rect x="1895.5" y="1097.3" width="8" height="8"/><rect x="1895.5" y="1105.7" width="8" height="8"/><rect x="1906.5" y="1086.8" width="8" height="8"/><rect x="1906.5" y="1095.2" width="8" height="8"/><rect x="1928.4" y="1091.0" width="8" height="8"/><rect x="1972.2" y="1095.2" width="8" height="8"/><rect x="1972.2" y="1103.6" width="8" height="8"/><rect x="1939.3" y="1107.8" width="8" height="8"/><rect x="1873.6" y="1112.0" width="8" height="8"/><rect x="1884.5" y="1118.2" width="8" height="8"/><rect x="1895.5" y="1115.1" width="8" height="8"/><rect x="1895.5" y="1121.4" width="8" height="8"/><rect x="1906.5" y="1114.1" width="8" height="8"/><rect x="1917.4" y="1115.1" width="8" height="8"/><rect x="1917.4" y="1122.4" width="8" height="8"/><rect x="1961.3" y="1116.2" width="8" height="8"/><rect x="1961.3" y="1122.4" width="8" height="8"/><rect x="1884.5" y="1127.7" width="8" height="8"/><rect x="1884.5" y="1132.9" width="8" height="8"/><rect x="1895.5" y="1139.2" width="8" height="8"/><rect x="1939.3" y="1126.6" width="8" height="8"/><rect x="1950.3" y="1132.9" width="8" height="8"/><rect x="1950.3" y="1143.4" width="8" height="8"/><rect x="1983.2" y="1139.2" width="8" height="8"/><rect x="1873.6" y="1145.5" width="8" height="8"/><rect x="1884.5" y="1153.9" width="8" height="8"/><rect x="1906.5" y="1153.9" width="8" height="8"/><rect x="1917.4" y="1153.9" width="8" height="8"/><rect x="1939.3" y="1156.0" width="8" height="8"/><rect x="1873.6" y="1174.8" width="8" height="8"/><rect x="1917.4" y="1172.7" width="8" height="8"/><rect x="1928.4" y="1176.9" width="8" height="8"/><rect x="1950.3" y="1174.8" width="8" height="8"/><rect x="1895.5" y="1187.4" width="8" height="8"/><rect x="1873.6" y="1193.7" width="8" height="8"/><rect x="1884.5" y="1229.3" width="8" height="8"/></g><path fill="#9b1ff0" d="M1526.9 869.5 L1532.0 878.5 L1521.8 878.5 Z M1811.8 915.6 L1816.9 924.6 L1806.7 924.6 Z M1746.1 949.2 L1751.2 958.2 L1741.0 958.2 Z M1789.9 963.8 L1795.0 972.8 L1784.8 972.8 Z M1789.9 978.5 L1795.0 987.5 L1784.8 987.5 Z M1702.2 980.6 L1707.3 989.6 L1697.1 989.6 Z M1702.2 991.1 L1707.3 1000.1 L1697.1 1000.1 Z M1702.2 995.3 L1707.3 1004.3 L1697.1 1004.3 Z M1669.3 1001.6 L1674.4 1010.6 L1664.2 1010.6 Z M1746.1 995.3 L1751.2 1004.3 L1741.0 1004.3 Z M1800.9 997.4 L1806.0 1006.4 L1795.8 1006.4 Z M1844.7 995.3 L1849.8 1004.3 L1839.6 1004.3 Z M1658.4 1008.9 L1663.5 1017.9 L1653.3 1017.9 Z M1702.2 1010.0 L1707.3 1019.0 L1697.1 1019.0 Z M1713.2 1010.0 L1718.3 1019.0 L1708.1 1019.0 Z M1746.1 1007.9 L1751.2 1016.9 L1741.0 1016.9 Z M1691.3 1018.3 L1696.4 1027.3 L1686.2 1027.3 Z M1768.0 1016.2 L1773.1 1025.2 L1762.9 1025.2 Z M1768.0 1022.5 L1773.1 1031.5 L1762.9 1031.5 Z M1746.1 1020.4 L1751.2 1029.4 L1741.0 1029.4 Z M1746.1 1026.7 L1751.2 1035.7 L1741.0 1035.7 Z M1658.4 1023.6 L1663.5 1032.6 L1653.3 1032.6 Z M1735.1 1026.7 L1740.2 1035.7 L1730.0 1035.7 Z M1844.7 1020.4 L1849.8 1029.4 L1839.6 1029.4 Z M1702.2 1030.9 L1707.3 1039.9 L1697.1 1039.9 Z M1713.2 1033.0 L1718.3 1042.0 L1708.1 1042.0 Z M1691.3 1035.7 L1696.4 1044.7 L1686.2 1044.7 Z M1757.0 1033.0 L1762.1 1042.0 L1751.9 1042.0 Z M1592.6 1005.8 L1597.7 1014.8 L1587.5 1014.8 Z M1625.5 1033.0 L1630.6 1042.0 L1620.4 1042.0 Z M1658.4 1043.5 L1663.5 1052.5 L1653.3 1052.5 Z M1680.3 1043.5 L1685.4 1052.5 L1675.2 1052.5 Z M1680.3 1051.9 L1685.4 1060.9 L1675.2 1060.9 Z M1713.2 1041.4 L1718.3 1050.4 L1708.1 1050.4 Z M1735.1 1047.7 L1740.2 1056.7 L1730.0 1056.7 Z M1768.0 1049.8 L1773.1 1058.8 L1762.9 1058.8 Z M1844.7 1056.1 L1849.8 1065.1 L1839.6 1065.1 Z M1866.6 1056.1 L1871.7 1065.1 L1861.5 1065.1 Z M1636.5 1066.5 L1641.6 1075.5 L1631.4 1075.5 Z M1724.1 1077.0 L1729.2 1086.0 L1719.0 1086.0 Z M1724.1 1089.6 L1729.2 1098.6 L1719.0 1098.6 Z M1680.3 1087.5 L1685.4 1096.5 L1675.2 1096.5 Z M1570.7 1100.1 L1575.8 1109.1 L1565.6 1109.1 Z M1614.5 1102.2 L1619.6 1111.2 L1609.4 1111.2 Z M1647.4 1100.1 L1652.5 1109.1 L1642.3 1109.1 Z M1647.4 1110.6 L1652.5 1119.6 L1642.3 1119.6 Z M1658.4 1106.4 L1663.5 1115.4 L1653.3 1115.4 Z M1680.3 1104.3 L1685.4 1113.3 L1675.2 1113.3 Z M1592.6 1116.8 L1597.7 1125.8 L1587.5 1125.8 Z M1625.5 1110.6 L1630.6 1119.6 L1620.4 1119.6 Z M1636.5 1110.6 L1641.6 1119.6 L1631.4 1119.6 Z M1494.0 1118.9 L1499.1 1127.9 L1488.9 1127.9 Z M1625.5 1121.0 L1630.6 1130.0 L1620.4 1130.0 Z M1680.3 1118.9 L1685.4 1127.9 L1675.2 1127.9 Z M1658.4 1125.2 L1663.5 1134.2 L1653.3 1134.2 Z M1669.3 1127.3 L1674.4 1136.3 L1664.2 1136.3 Z M1680.3 1127.3 L1685.4 1136.3 L1675.2 1136.3 Z M1691.3 1129.4 L1696.4 1138.4 L1686.2 1138.4 Z M1603.6 1133.6 L1608.7 1142.6 L1598.5 1142.6 Z M1636.5 1137.8 L1641.6 1146.8 L1631.4 1146.8 Z M1713.2 1137.8 L1718.3 1146.8 L1708.1 1146.8 Z M1757.0 1173.4 L1762.1 1182.4 L1751.9 1182.4 Z M1592.6 1179.7 L1597.7 1188.7 L1587.5 1188.7 Z M1592.6 1192.3 L1597.7 1201.3 L1587.5 1201.3 Z M1526.9 1196.5 L1532.0 1205.5 L1521.8 1205.5 Z M1592.6 1227.9 L1597.7 1236.9 L1587.5 1236.9 Z"/></svg>
<div class="t" style="left:1366.65px;top:1244.8px;font-size:17.5px;color:#4d4d4d;font-weight:normal;font-family:'Liberation Sans', sans-serif;-webkit-text-stroke:0;letter-spacing:0.538px;">40</div>
<div class="t" style="left:1366.3px;top:1035.2px;font-size:17.5px;color:#4d4d4d;font-weight:normal;font-family:'Liberation Sans', sans-serif;-webkit-text-stroke:0;letter-spacing:0.888px;">50</div>
<div class="t" style="left:1366.12px;top:825.6px;font-size:17.5px;color:#4d4d4d;font-weight:normal;font-family:'Liberation Sans', sans-serif;-webkit-text-stroke:0;letter-spacing:1.062px;">60</div>
<div class="t" style="left:1391.49px;top:1454.1px;font-size:17.5px;color:#4d4d4d;font-weight:normal;font-family:'Liberation Sans', sans-serif;-webkit-text-stroke:0;letter-spacing:-0.106px;">170</div>
<div class="t" style="left:1501.09px;top:1454.1px;font-size:17.5px;color:#4d4d4d;font-weight:normal;font-family:'Liberation Sans', sans-serif;-webkit-text-stroke:0;letter-spacing:-0.106px;">180</div>
<div class="t" style="left:1610.69px;top:1454.1px;font-size:17.5px;color:#4d4d4d;font-weight:normal;font-family:'Liberation Sans', sans-serif;-webkit-text-stroke:0;letter-spacing:-0.106px;">190</div>
<div class="t" style="left:1720.72px;top:1454.1px;font-size:17.5px;color:#4d4d4d;font-weight:normal;font-family:'Liberation Sans', sans-serif;-webkit-text-stroke:0;letter-spacing:-0.325px;">200</div>
<div class="t" style="left:1830.32px;top:1454.1px;font-size:17.5px;color:#4d4d4d;font-weight:normal;font-family:'Liberation Sans', sans-serif;-webkit-text-stroke:0;letter-spacing:-0.325px;">210</div>
<div class="t" style="left:1939.92px;top:1454.1px;font-size:17.5px;color:#4d4d4d;font-weight:normal;font-family:'Liberation Sans', sans-serif;-webkit-text-stroke:0;letter-spacing:-0.325px;">220</div>
<div class="t" style="left:2049.52px;top:1454.1px;font-size:17.5px;color:#4d4d4d;font-weight:normal;font-family:'Liberation Sans', sans-serif;-webkit-text-stroke:0;letter-spacing:-0.325px;">230</div>
<div class="t" style="left:1657.28px;top:1475.2px;font-size:21.5px;color:#000000;font-weight:normal;font-family:'Liberation Sans', sans-serif;-webkit-text-stroke:0;letter-spacing:0.151px;">Flipper length (mm)</div>
<div class="t" style="left:1351px;top:1129px;transform:translate(-50%,-50%) rotate(-90deg);font-size:21.5px;font-family:'Liberation Sans', sans-serif;color:#000;letter-spacing:0.2px;-webkit-text-stroke:0">Bill length (mm)</div>
<div class="t" style="left:2138.78px;top:1063.4px;font-size:21.5px;color:#000000;font-weight:normal;font-family:'Liberation Sans', sans-serif;-webkit-text-stroke:0;letter-spacing:0.012px;">Penguin species</div>
<div class="t" style="left:2184.0px;top:1102.7px;font-size:17.5px;color:#000000;font-weight:normal;font-family:'Liberation Sans', sans-serif;-webkit-text-stroke:0;letter-spacing:-0.172px;">Adelie</div>
<div class="t" style="left:2183.12px;top:1136.1px;font-size:17.5px;color:#000000;font-weight:normal;font-family:'Liberation Sans', sans-serif;-webkit-text-stroke:0;letter-spacing:0.334px;">Chinstrap</div>
<div class="t" style="left:2183.12px;top:1169.7px;font-size:17.5px;color:#000000;font-weight:normal;font-family:'Liberation Sans', sans-serif;-webkit-text-stroke:0;letter-spacing:0.235px;">Gentoo</div>
<svg class="r" style="left:2140px;top:1100px;" width="32" height="90" viewBox="0 0 32 90"><circle cx="16" cy="11" r="4.2" fill="#ff8000"/><path d="M16 39 L21 48.5 L11 48.5 Z" fill="#9b1ff0"/><rect x="12" y="74.7" width="8" height="8" fill="#178080"/></svg>
<div class="t" style="left:1330.44px;top:1530.8px;font-size:32px;color:#3d4852;font-weight:normal;font-family:'Liberation Sans', sans-serif;clip-path:inset(0 0 14.8px 0);letter-spacing:-0.506px;">Figure 1: Flipper and bill length for penguins at Palmer Station LTER</div>
<div class="r" style="left:1280px;top:1548px;width:1120px;height:5.5px;background:#f5f5f5;"></div>
<div class="r" style="left:1279px;top:1548px;width:2.5px;height:8px;background:#2d62a2;"></div>
<div class="r" style="left:2397.5px;top:1548px;width:2.5px;height:8px;background:#2d62a2;"></div>
<div class="r" style="left:1279px;top:1553.5px;width:1121px;height:2.5px;background:#2d62a2;"></div>
<div class="r" style="left:0px;top:1555.5px;width:2400px;height:2px;background:#dcdcdc;"></div>
</div></body></html>
